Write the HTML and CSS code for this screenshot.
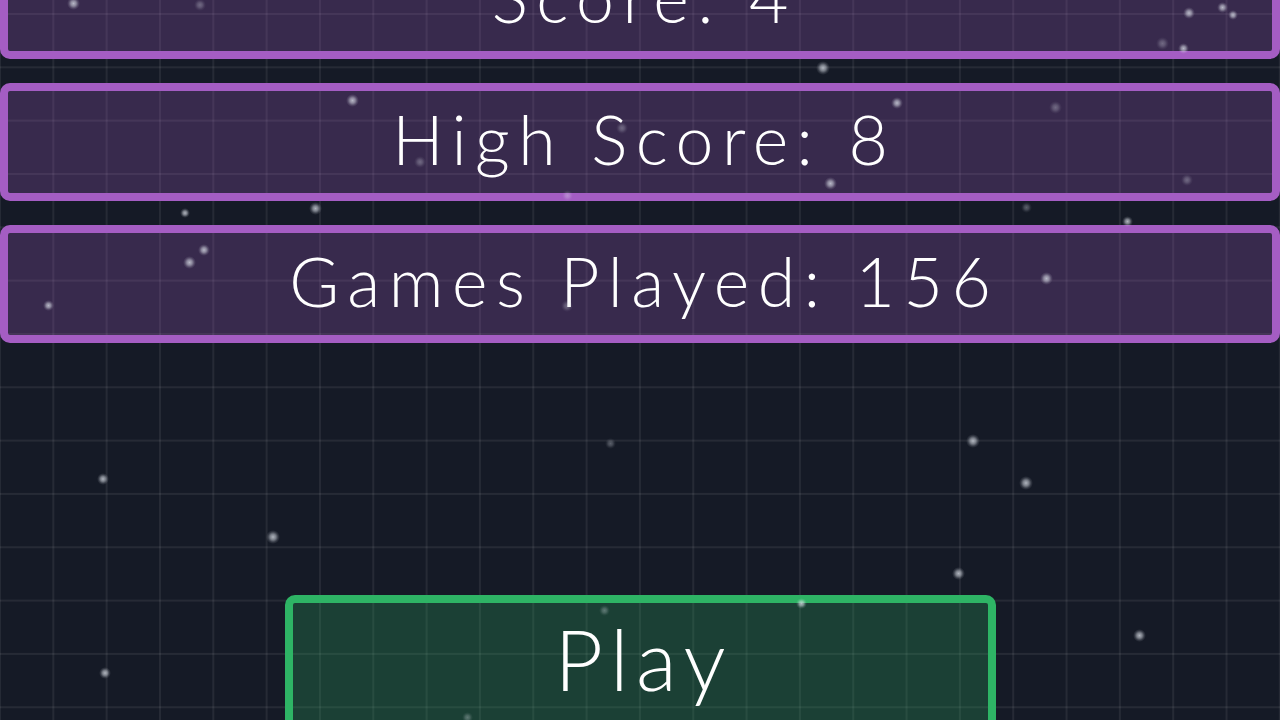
FILE: index.html
```html
<!DOCTYPE html>
<html lang="en">
<head>
<meta charset="utf-8">
<title>Stats</title>
<link rel="stylesheet" href="styles.css">
</head>
<body>
<div class="screen">
  <div class="particles" aria-hidden="true">
    <span class="dot" style="--x:73px;--y:3px;--s:13px"></span>
    <span class="dot faint" style="--x:200px;--y:5px;--s:12px"></span>
    <span class="dot" style="--x:352px;--y:100px;--s:13px"></span>
    <span class="dot faint" style="--x:420px;--y:162px;--s:12px"></span>
    <span class="dot faint" style="--x:622px;--y:128px;--s:12px"></span>
    <span class="dot" style="--x:185px;--y:213px;--s:10px"></span>
    <span class="dot" style="--x:315px;--y:208px;--s:13px"></span>
    <span class="dot" style="--x:204px;--y:250px;--s:12px"></span>
    <span class="dot" style="--x:189px;--y:262px;--s:13px"></span>
    <span class="dot" style="--x:48px;--y:305px;--s:11px"></span>
    <span class="dot faint" style="--x:567px;--y:306px;--s:12px"></span>
    <span class="dot faint" style="--x:567px;--y:195px;--s:11px"></span>
    <span class="dot" style="--x:1189px;--y:13px;--s:12px"></span>
    <span class="dot" style="--x:1222px;--y:7px;--s:11px"></span>
    <span class="dot" style="--x:1233px;--y:15px;--s:10px"></span>
    <span class="dot faint" style="--x:1162px;--y:43px;--s:13px"></span>
    <span class="dot" style="--x:1183px;--y:48px;--s:11px"></span>
    <span class="dot" style="--x:823px;--y:68px;--s:14px"></span>
    <span class="dot" style="--x:897px;--y:103px;--s:12px"></span>
    <span class="dot faint" style="--x:1055px;--y:107px;--s:13px"></span>
    <span class="dot" style="--x:830px;--y:183px;--s:13px"></span>
    <span class="dot faint" style="--x:1187px;--y:180px;--s:12px"></span>
    <span class="dot faint" style="--x:1026px;--y:207px;--s:11px"></span>
    <span class="dot" style="--x:1127px;--y:221px;--s:11px"></span>
    <span class="dot" style="--x:1046px;--y:278px;--s:13px"></span>
    <span class="dot" style="--x:103px;--y:479px;--s:12px"></span>
    <span class="dot" style="--x:273px;--y:537px;--s:14px"></span>
    <span class="dot faint" style="--x:610px;--y:443px;--s:11px"></span>
    <span class="dot" style="--x:105px;--y:673px;--s:12px"></span>
    <span class="dot faint" style="--x:467px;--y:717px;--s:11px"></span>
    <span class="dot faint" style="--x:604px;--y:610px;--s:11px"></span>
    <span class="dot" style="--x:973px;--y:441px;--s:14px"></span>
    <span class="dot" style="--x:1026px;--y:483px;--s:14px"></span>
    <span class="dot" style="--x:958px;--y:573px;--s:13px"></span>
    <span class="dot" style="--x:801px;--y:603px;--s:11px"></span>
    <span class="dot" style="--x:1139px;--y:635px;--s:13px"></span>
  </div>

  <div class="stats">
    <div class="stat">Score: 4</div>
    <div class="stat">High Score: 8</div>
    <div class="stat">Games Played: 156</div>
  </div>

  <button class="play" type="button">Play</button>
</div>
</body>
</html>
```

FILE: styles.css
```css
html, body {
  margin: 0;
  padding: 0;
  width: 1280px;
  height: 720px;
  overflow: hidden;
}

body {
  background-color: #151a26;
  background-image:
    linear-gradient(to right, rgba(255, 255, 255, 0.07) 0 2px, transparent 2px),
    linear-gradient(to bottom, rgba(255, 255, 255, 0.07) 0 2px, transparent 2px);
  background-size: 53.333px 53.333px;
  background-position: -1px 13px;
  font-family: "Lato", "Open Sans", "DejaVu Sans", sans-serif;
  font-weight: 300;
  color: #ffffff;
}

.screen {
  position: relative;
  width: 1280px;
  height: 720px;
  display: flex;
  flex-direction: column;
  align-items: center;
}

.particles {
  position: absolute;
  inset: 0;
  pointer-events: none;
  z-index: 2;
}

.dot {
  position: absolute;
  left: var(--x);
  top: var(--y);
  width: var(--s);
  height: var(--s);
  margin-left: calc(var(--s) / -2);
  margin-top: calc(var(--s) / -2);
  border-radius: 50%;
  background: radial-gradient(circle, rgba(225, 230, 238, 0.75) 0, rgba(225, 230, 238, 0.5) 28%, rgba(225, 230, 238, 0.15) 52%, rgba(225, 230, 238, 0) 70%);
}

.dot.faint {
  opacity: 0.45;
}

.stats {
  width: 1280px;
  margin-top: -59px;
  display: flex;
  flex-direction: column;
  gap: 24px;
}

.stat {
  box-sizing: border-box;
  height: 118px;
  border: 8px solid #a45dc3;
  border-radius: 10px;
  background: rgba(164, 93, 195, 0.25);
  display: flex;
  align-items: center;
  justify-content: center;
  font-size: 68px;
  line-height: 1;
  letter-spacing: 8.5px;
  padding: 0 0 6px 8.5px;
}

.play {
  box-sizing: border-box;
  margin-top: 252px;
  width: 711px;
  height: 140px;
  flex: none;
  border: 8px solid #2eb465;
  border-radius: 10px;
  background: rgba(46, 180, 101, 0.25);
  color: #ffffff;
  font-family: inherit;
  font-weight: 300;
  font-size: 84px;
  line-height: 1;
  letter-spacing: 7.5px;
  padding: 0 0 12px 7.5px;
  display: flex;
  align-items: center;
  justify-content: center;
}
```
